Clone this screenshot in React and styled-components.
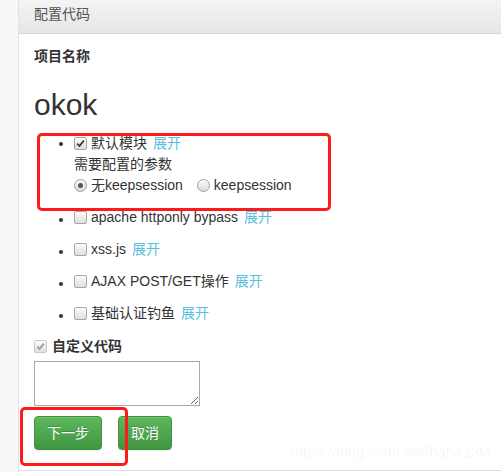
import React from 'react'
import styled, { createGlobalStyle } from 'styled-components'

const GlobalStyle = createGlobalStyle`
    html, body {
        margin: 0;
        padding: 0;
        background: #fff;
        font-family: "Liberation Sans", "Noto Sans CJK SC", sans-serif;
        font-size: 14px;
        color: #333;
    }
`;

// 전체 화면
const Page = styled.div`
    display: flex;
    width: 501px;
    height: 472px;
    position: relative;
    overflow: hidden;
`;

// 왼쪽 회색 띠
const SideStrip = styled.div`
    width: 18px;
    flex: none;
    background: #f8f8f8;
    border-right: 1px solid #e2e2e2;
`;

const Panel = styled.div`
    flex: 1;
    height: 470px;
    border-bottom: 1px solid #dcdcdc;
    display: flex;
    flex-direction: column;
`;

const PanelHeader = styled.div`
    height: 33px;
    line-height: 28px;
    padding-left: 15px;
    color: #555;
    background: linear-gradient(to bottom, #f4f4f4, #e6e6e6);
    border-bottom: 1px solid #d6d6d6;
`;

const PanelBody = styled.div`
    padding: 0 15px;
`;

const FieldLabel = styled.div`
    font-weight: bold;
    margin-top: 12px;
    line-height: 20px;
    display: flex;
    align-items: center;
    gap: 5px;
`;

const ProjectName = styled.h1`
    font-size: 30px;
    font-weight: normal;
    margin: 22px 0 12px;
    line-height: 33px;
    color: #333;
`;

const ModuleList = styled.ul`
    margin: 0;
    padding-left: 40px;
    list-style: disc;
`;

const ModuleItem = styled.li`
    line-height: 21px;
    margin-bottom: 11px;
`;

const Row = styled.div`
    display: flex;
    align-items: center;
    gap: 4px;
`;

const Expand = styled.a`
    color: #5bc0de;
    text-decoration: none;
    margin-left: 2px;
`;

const Box = styled.span`
    width: 11px;
    height: 11px;
    flex: none;
    border: 1px solid ${p => (p.$disabled ? '#c8c8c8' : '#a6a6a6')};
    border-radius: 2px;
    background: linear-gradient(to bottom, #fcfcfc, #dedede);
    display: inline-flex;
    align-items: center;
    justify-content: center;
`;

const Radio = styled.span`
    width: 11px;
    height: 11px;
    flex: none;
    border: 1px solid #a0a0a0;
    border-radius: 50%;
    background: linear-gradient(to bottom, #fcfcfc, #dadada);
    display: inline-flex;
    align-items: center;
    justify-content: center;

    &::after {
        content: '';
        width: 5px;
        height: 5px;
        border-radius: 50%;
        background: ${p => (p.$checked ? '#555' : 'transparent')};
    }
`;

const RadioGroup = styled.div`
    display: flex;
    align-items: center;
    gap: 14px;
`;

const CodeArea = styled.textarea`
    display: block;
    width: 164px;
    height: 43px;
    margin-top: 5px;
    border: 1px solid #a9a9a9;
    padding: 0;
    font-family: inherit;
`;

const Buttons = styled.div`
    display: flex;
    gap: 16px;
    margin-top: 10px;
`;

const GreenButton = styled.button`
    font-family: inherit;
    font-size: 14px;
    line-height: 20px;
    padding: 6px 12px;
    color: #fff;
    border: 1px solid #3e8f3e;
    border-radius: 4px;
    background: linear-gradient(to bottom, #5cb85c, #419641);
    text-shadow: 0 -1px 0 rgba(0, 0, 0, 0.2);
    box-shadow: inset 0 1px 0 rgba(255, 255, 255, 0.15), 0 1px 1px rgba(0, 0, 0, 0.075);
`;

// 빨간 표시 상자
const Mark = styled.div`
    position: absolute;
    border: 3px solid #ff1a1a;
    border-radius: 5px;
    pointer-events: none;
`;

const Watermark = styled.div`
    position: absolute;
    right: 10px;
    bottom: 12px;
    font-size: 15px;
    color: rgba(0, 0, 0, 0.05);
`;

const Check = ({ checked, disabled }) => (
    <Box $disabled={disabled}>
        {checked && (
            <svg width="9" height="9" viewBox="0 0 9 9">
                <path d="M1.2 4.6 L3.5 7 L7.8 1.6" fill="none" stroke={disabled ? '#9a9a9a' : '#333'} strokeWidth="1.7" />
            </svg>
        )}
    </Box>
);

const modules = ['apache httponly bypass', 'xss.js', 'AJAX POST/GET操作', '基础认证钓鱼'];

export default function App() {
    return (
        <>
            <GlobalStyle />
            <Page>
                <SideStrip />
                <Panel>
                    <PanelHeader>配置代码</PanelHeader>
                    <PanelBody>
                        <FieldLabel>项目名称</FieldLabel>
                        <ProjectName>okok</ProjectName>
                        <ModuleList>
                            <ModuleItem>
                                <Row>
                                    <Check checked />
                                    默认模块 <Expand>展开</Expand>
                                </Row>
                                <div>需要配置的参数</div>
                                <RadioGroup>
                                    <Row><Radio $checked />无keepsession</Row>
                                    <Row><Radio />keepsession</Row>
                                </RadioGroup>
                            </ModuleItem>
                            {modules.map(m => (
                                <ModuleItem key={m}>
                                    <Row>
                                        <Check />
                                        {m} <Expand>展开</Expand>
                                    </Row>
                                </ModuleItem>
                            ))}
                        </ModuleList>
                        <FieldLabel>
                            <Check checked disabled />
                            自定义代码
                        </FieldLabel>
                        <CodeArea />
                        <Buttons>
                            <GreenButton>下一步</GreenButton>
                            <GreenButton>取消</GreenButton>
                        </Buttons>
                    </PanelBody>
                </Panel>
                <Mark style={{ left: 37, top: 133, width: 288, height: 72 }} />
                <Mark style={{ left: 20, top: 407, width: 102, height: 53 }} />
                <Watermark>https://blog.csdn.net/haha13l4</Watermark>
            </Page>
        </>
    );
}
